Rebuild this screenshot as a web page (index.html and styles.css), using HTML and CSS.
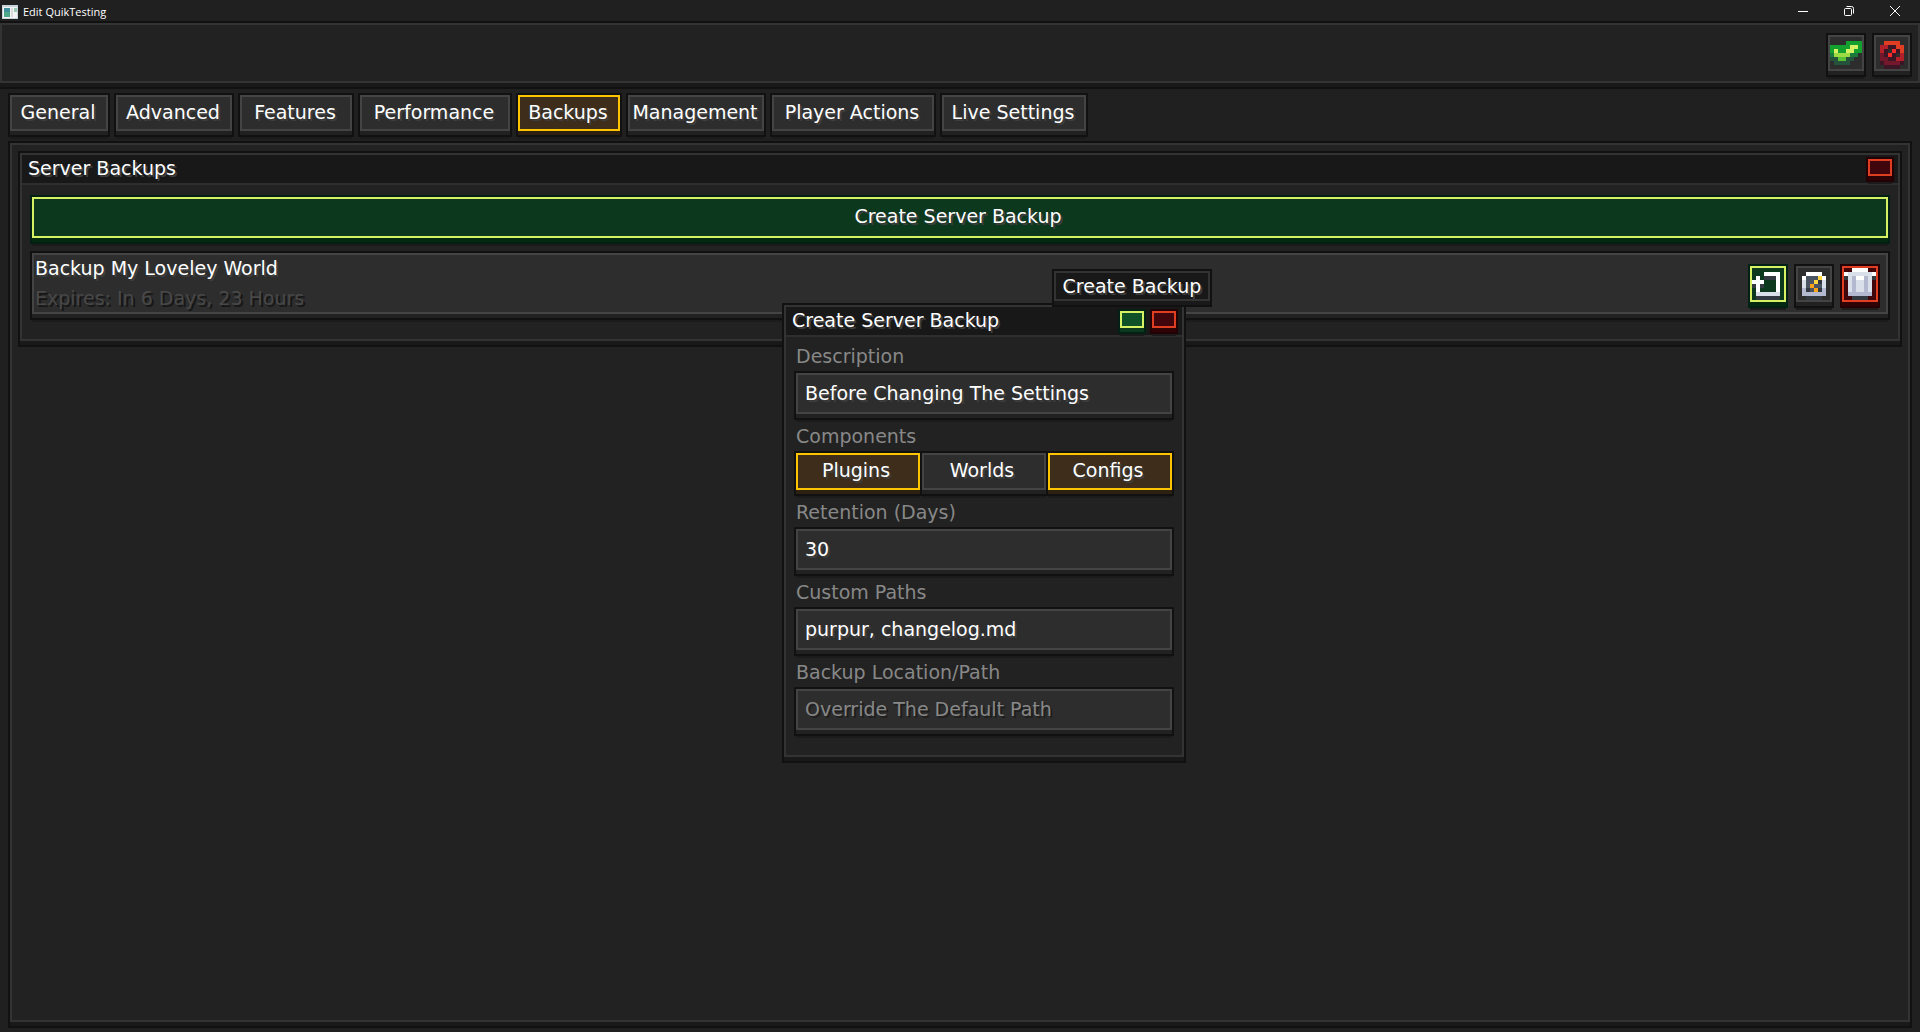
FILE: index.html
```html
<!DOCTYPE html>
<html lang="en">
<head>
<meta charset="utf-8">
<title>Edit QuikTesting</title>
<link rel="stylesheet" href="styles.css">
</head>
<body>
<header class="titlebar">
  <svg class="app-icon" viewBox="0 0 16 14"><rect width="16" height="14" fill="#c9d3da"/><rect x="1" y="2" width="14" height="11" fill="#f4f4f4"/><rect x="2" y="3" width="6" height="9" fill="#3f8f9c"/><rect x="2" y="7" width="6" height="5" fill="#4ca886"/><rect x="12" y="3" width="3" height="4" fill="#9cc9b4"/><rect x="9" y="3" width="2" height="9" fill="#dcdcdc"/></svg>
  <span class="app-title">Edit QuikTesting</span>
  <button class="win" aria-label="Minimize"><svg viewBox="0 0 12 12"><path d="M1 6.500h10"/></svg></button>
  <button class="win" aria-label="Restore"><svg viewBox="0 0 12 12"><rect x="1.500" y="3.500" width="7" height="7" rx="1"/><path d="M3.500 1.500h5q2 0 2 2v5"/></svg></button>
  <button class="win" aria-label="Close"><svg viewBox="0 0 12 12"><path d="M1 1l10 10M11 1L1 11"/></svg></button>
</header>

<div class="toolbar slab">
  <button class="icon-btn raised" aria-label="Save"><svg viewBox="0 0 8 8" shape-rendering="crispEdges">
    <path fill="#14a02e" d="M4 1h4v3H0V2h4z"/>
    <path fill="#d6f264" d="M5 2h2v1H6v1H4V3h1zM1 3h1v1H1z"/>
    <path fill="#1a7a3e" d="M0 4h1v1H0zM5 4h2v1H5z"/>
    <path fill="#9cdb43" d="M1 4h4v1H1z"/>
    <path fill="#24523b" d="M0 5h6v1H5v1H1V6H0z"/>
    <path fill="#59c135" d="M2 5h2v1H2z"/></svg></button>
  <button class="icon-btn raised" aria-label="Cancel"><svg viewBox="0 0 8 8" shape-rendering="crispEdges">
    <path fill="#3b1725" d="M3 2h2v1H3zM2 3h1v2H2zM5 3h1v1H5zM4 4h1v1H4zM3 5h2v1H3zM1 6h6v1H6v1H2V7H1z"/>
    <path fill="#df3e23" d="M2 1h4v1h1v2H6V3H5V2H2z"/>
    <path fill="#b4202a" d="M1 2h2v1H2v1H1zM6 4h1v2H5V5h1z"/>
    <path fill="#73172d" d="M1 4h1v1h1v1h3v1H2V6H1z"/>
    <path fill="#fa2a2a" d="M4 3h1v1H4zM3 4h1v1H3z"/></svg></button>
</div>

<nav class="tabs">
  <button class="tab raised">General</button>
  <button class="tab raised">Advanced</button>
  <button class="tab raised">Features</button>
  <button class="tab raised">Performance</button>
  <button class="tab raised selected" aria-current="page">Backups</button>
  <button class="tab raised">Management</button>
  <button class="tab raised">Player Actions</button>
  <button class="tab raised">Live Settings</button>
</nav>

<main class="content slab">
  <section class="panel slab">
    <div class="panel-head">
      <h1 class="panel-title">Server Backups</h1>
      <button class="chip raised red" aria-label="Close panel"></button>
    </div>
    <div class="panel-body">
      <button class="create raised green">Create Server Backup</button>
      <article class="backup raised">
        <div class="backup-text">
          <p class="backup-name">Backup My Loveley World</p>
          <p class="backup-expiry">Expires: In 6 Days, 23 Hours</p>
        </div>
        <button class="icon-btn raised green" aria-label="Restore backup"><svg viewBox="0 0 8 8" shape-rendering="crispEdges">
          <path fill="#333941" d="M3 2h3v1H3zM0 4h3v1H0zM1 7h6v1H1z"/>
          <path fill="#fff" d="M3 1h4v5H6V2H3zM1 2h1v1h1v1H2v2H1V4H0V3h1z"/>
          <path fill="#dae0ea" d="M1 6h6v1H1z"/></svg></button>
        <button class="icon-btn raised" aria-label="Edit expiry"><svg viewBox="0 0 8 8" shape-rendering="crispEdges">
          <path fill="#4a5462" d="M2 2h4v4H2z"/>
          <path fill="#333941" d="M5 3h1v1H5zM2 5h1v1H2zM5 5h1v1H5zM2 7h4v1H2z"/>
          <path fill="#fff" d="M2 1h4v1H2zM1 2h1v1H1zM6 2h1v1H6z"/>
          <path fill="#dae0ea" d="M1 3h1v2H1zM6 3h1v2H6z"/>
          <path fill="#b3b9d1" d="M1 5h1v1h4V5h1v2H1z"/>
          <path fill="#ffd541" d="M5 2h1v1H5zM4 3h1v1H4z"/>
          <path fill="#f9a31b" d="M3 4h1v1h1v1H4V5H3z"/></svg></button>
        <button class="icon-btn raised red" aria-label="Delete backup"><svg viewBox="0 0 8 8" shape-rendering="crispEdges">
          <path fill="#333941" d="M0 2h1v1H0zM7 2h1v1H7zM2 7h4v1H2z"/>
          <path fill="#b3b9d1" d="M1 2h6v5H1z"/>
          <path fill="#dae0ea" d="M1 1h6v1H1zM1 2h1v4H1zM3 3h2v3H3zM6 2h1v4H6z"/>
          <path fill="#fff" d="M2 0h4v1H2zM0 1h1v1H0zM7 1h1v1H7zM3 2h2v1H3z"/></svg></button>
      </article>
    </div>
  </section>
</main>

<form class="dialog slab" role="dialog" aria-labelledby="dialog-title">
  <div class="panel-head">
    <h2 class="panel-title" id="dialog-title">Create Server Backup</h2>
    <button class="chip raised green bright" type="button" aria-label="Create Backup"></button>
    <button class="chip raised red" type="button" aria-label="Cancel backup"></button>
    <span class="tooltip slab" role="tooltip">Create Backup</span>
  </div>
  <div class="fields">
    <label class="label" for="description">Description</label>
    <input class="field raised" id="description" value="Before Changing The Settings">
    <span class="label" id="components">Components</span>
    <div class="toggles" role="group" aria-labelledby="components">
      <button class="toggle raised selected" type="button" aria-pressed="true">Plugins</button>
      <button class="toggle raised" type="button" aria-pressed="false">Worlds</button>
      <button class="toggle raised selected" type="button" aria-pressed="true">Configs</button>
    </div>
    <label class="label" for="retention">Retention (Days)</label>
    <input class="field raised" id="retention" value="30">
    <label class="label" for="paths">Custom Paths</label>
    <input class="field raised" id="paths" value="purpur, changelog.md">
    <label class="label" for="location">Backup Location/Path</label>
    <input class="field raised" id="location" placeholder="Override The Default Path">
  </div>
</form>
</body>
</html>
```
FILE: styles.css
```css
* { box-sizing: border-box; }

body {
  margin: 0;
  min-height: 100vh;
  display: flex;
  flex-direction: column;
  background: #202020;
  color: #fff;
  font: 19px/24px "DejaVu Sans", sans-serif;
  text-shadow: 2px 2px 0 #3e3e3e;
}

h1, h2, p { margin: 0; font: inherit; }

button, input {
  margin: 0;
  padding: 0;
  border-radius: 0;
  color: inherit;
  font: inherit;
  text-shadow: inherit;
}

/* Flat surfaces with a dark outline and a thick lower edge */
.slab {
  background: #222;
  border: 2px solid #333;
  box-shadow: 0 4px 0 #191919, 0 0 0 2px #111, 0 4px 0 2px #111;
}

/* Controls: same construction, lighter face */
.raised {
  --face: #2d2d2d;
  --rim: #444;
  --lip: #212121;
  --edge: #111;
  background: var(--face);
  border: 2px solid var(--rim);
  box-shadow: 0 4px 0 var(--lip), 0 0 0 2px var(--edge), 0 4px 0 2px var(--edge), 0 8px 0 #1b1b1b;
}

.selected { --face: #3d2d1a; --rim: #ffc400; --lip: #2c2010; }
.green { --face: #0c381e; --rim: #d6f264; --lip: #03290f; --edge: #032014; }
.bright { --face: #0f5228; --lip: #0c381e; }
.red { --face: #41060b; --rim: #df3e23; --lip: #2f0205; --edge: #230206; }

/* Window title bar */
.titlebar {
  display: flex;
  align-items: center;
  height: 23px;
  padding: 0 2px;
  background: #202020;
  font: 11px/16px "Open Sans", sans-serif;
  text-shadow: none;
}

.app-icon { width: 16px; height: 14px; }
.app-title { flex: 1; padding-left: 5px; }

.win {
  display: grid;
  place-items: center;
  width: 46px;
  height: 20px;
  padding-bottom: 2px;
  background: none;
  border: 0;
}

.win svg { width: 12px; height: 12px; fill: none; stroke: #fff; }

/* Toolbar */
.toolbar {
  display: flex;
  justify-content: flex-end;
  gap: 10px;
  height: 60px;
  padding: 10px 8px;
}

.icon-btn { flex: none; width: 36px; height: 36px; }
.icon-btn svg { display: block; width: 32px; height: 32px; }

/* Tabs */
.tabs {
  display: grid;
  grid-template-columns: 98px 116px 112px 150px 102px 136px 162px 144px;
  gap: 8px;
  margin: 12px 10px;
}

.tab { height: 36px; padding: 0 2px 2px 0; white-space: nowrap; }

/* Content */
.content {
  flex: 1;
  margin: 0 10px 10px;
  padding: 8px;
}

.panel-head {
  position: relative;
  display: flex;
  align-items: flex-start;
  gap: 8px;
  height: 30px;
  padding: 4px 6px;
  background: #181818;
  border-bottom: 2px solid #2e2e2e;
}

.panel-title { flex: 1; line-height: 18px; }
.chip { width: 24px; height: 17px; }

.panel-body { padding: 12px 10px 25px; }

.create { display: block; width: 100%; height: 41px; padding: 0 4px 3px 0; }

.backup {
  display: flex;
  align-items: flex-start;
  gap: 10px;
  height: 61px;
  margin-top: 15px;
  padding: 11px 8px 0 1px;
}

.backup-text { flex: 1; margin-top: -12px; }
.backup-name { line-height: 28px; }
.backup-expiry { line-height: 32px; color: #484848; text-shadow: 2px 2px 0 #161616; }

/* Dialog floats over the page */
.dialog {
  position: absolute;
  top: 305px;
  left: 50%;
  width: 400px;
  margin-left: -176px;
}

.fields { padding: 0 10px 25px; }

.label {
  display: block;
  margin: 10px 0 5px;
  color: #888;
  text-shadow: none;
}

.label:first-child { margin-top: 7px; }

.field {
  display: block;
  width: 100%;
  height: 41px;
  padding: 0 8px 2px 7px;
}

.field::placeholder { color: #888; opacity: 1; text-shadow: 2px 2px 0 #1e1e1e; }

.toggles { display: grid; grid-template-columns: repeat(3, 1fr); gap: 2px; }
.toggle { height: 37px; padding: 0 4px 4px 0; }

.tooltip {
  position: absolute;
  right: -28px;
  bottom: 34px;
  width: 156px;
  height: 30px;
  background: #181818;
  line-height: 26px;
  text-align: center;
  white-space: nowrap;
}
```
